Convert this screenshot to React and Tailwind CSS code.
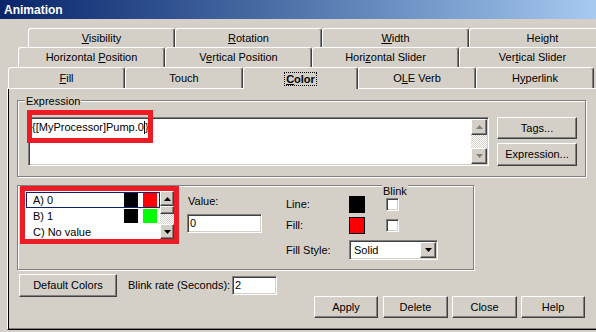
import React from 'react';

const raised =
  'border border-t-white border-l-white border-r-[#404040] border-b-[#404040] shadow-[inset_-1px_-1px_0_#808080] bg-[#d4d0c8]';
const sunken =
  'border border-t-[#808080] border-l-[#808080] border-r-white border-b-white shadow-[inset_1px_1px_0_#404040,inset_-1px_-1px_0_#d4d0c8] p-px';
const etched = 'border border-[#808080] shadow-[inset_1px_1px_0_#ffffff,1px_1px_0_#ffffff]';
const checker =
  'bg-[repeating-conic-gradient(#ffffff_0%_25%,#d4d0c8_0%_50%)] bg-[length:2px_2px]';

function Label({ text }) {
  const i = text.indexOf('&');
  if (i < 0) return <span className="whitespace-pre">{text}</span>;
  return (
    <span className="whitespace-pre">
      {text.slice(0, i)}
      <u>{text[i + 1]}</u>
      {text.slice(i + 2)}
    </span>
  );
}

function Tab({ label, w, active }) {
  return (
    <div
      className={`${w} shrink-0 flex items-center justify-center rounded-t-[3px] border-t border-l border-r border-t-white border-l-white border-r-[#404040] shadow-[inset_-1px_0_0_#808080] ${
        active ? 'h-[22px] relative z-10 bg-[#d4d0c8]' : 'h-full'
      }`}
    >
      {active ? (
        <span className="font-bold border border-dotted border-black px-px leading-[12px]">
          <Label text={label} />
        </span>
      ) : (
        <Label text={label} />
      )}
    </div>
  );
}

function Arrow({ down, gray }) {
  return (
    <svg width="7" height="4" viewBox="0 0 7 4">
      <path d={down ? 'M0 0h7L3.5 4z' : 'M0 4h7L3.5 0z'} fill={gray ? '#808080' : '#000000'} />
    </svg>
  );
}

function Btn({ className, children }) {
  return <div className={`${raised} flex items-center justify-center ${className}`}>{children}</div>;
}

const rows = [
  { label: 'A) 0', a: 'bg-black', b: 'bg-[#ff0000]', sel: true },
  { label: 'B) 1', a: 'bg-black', b: 'bg-[#00ff00]' },
  { label: 'C) No value' },
];

export default function App() {
  return (
    <div className="relative w-[596px] h-[332px] overflow-hidden bg-[#d4d0c8] text-black font-['Liberation_Sans',Arial,sans-serif] text-[11px] leading-[13px]">
      {/* title bar */}
      <div className="h-[19px] flex items-center pt-[2px] pl-[4px] bg-gradient-to-r from-[#0a246a] to-[#a6caf0] text-white font-bold text-[12px]">
        Animation
      </div>

      {/* tab rows */}
      <div className="mt-[9px] ml-[28px] h-[19px] flex">
        <Tab w="w-[147px]" label="&Visibility" />
        <Tab w="w-[147px]" label="&Rotation" />
        <Tab w="w-[147px]" label="&Width" />
        <Tab w="w-[147px]" label="Hei&ght" />
      </div>
      <div className="ml-[18px] h-[20px] flex">
        <Tab w="w-[147px]" label="Horizontal &Position" />
        <Tab w="w-[147px]" label="V&ertical Position" />
        <Tab w="w-[147px]" label="Hori&zontal Slider" />
        <Tab w="w-[147px]" label="Ver&tical Slider" />
      </div>
      <div className="ml-[8px] h-[21px] flex items-start">
        <Tab w="w-[117px]" label="&Fill" />
        <Tab w="w-[118px]" label="Touch" />
        <Tab w="w-[115px]" label="&Color" active />
        <Tab w="w-[118px]" label="O&LE Verb" />
        <Tab w="w-[118px]" label="H&yperlink" />
      </div>

      {/* panel */}
      <div className="ml-[7px] w-[600px] h-[242px] border-t border-l border-b border-t-white border-l-white border-b-black shadow-[inset_1px_0_0_#000000,inset_0_-1px_0_#808080] pt-[11px] pl-[9px]">
        {/* Expression group */}
        <div className={`${etched} relative w-[569px] h-[77px] pl-[10px] pt-[16px] flex`}>
          <span className="absolute -top-[6px] left-[7px] px-px bg-[#d4d0c8]">Expression</span>
          <div className={`${sunken} w-[461px] h-[49px] bg-white flex`}>
            <div className="flex-1 pl-[2px] pt-[2px] flex items-start">
              <span>{'{[MyProcessor]Pump.0'}</span>
              <span className="w-px h-[13px] bg-black" />
              <span>{'}'}</span>
            </div>
            <div className="w-[16px] flex flex-col">
              <Btn className="h-[16px]">
                <Arrow gray />
              </Btn>
              <div className={`flex-1 ${checker}`} />
              <Btn className="h-[16px]">
                <Arrow down gray />
              </Btn>
            </div>
          </div>
          <div className="ml-[8px] w-[80px] flex flex-col gap-[4px]">
            <Btn className="h-[22px]">Tags...</Btn>
            <Btn className="h-[23px]">Expression...</Btn>
          </div>
        </div>

        {/* Color group */}
        <div className={`${etched} relative mt-[8px] w-[457px] h-[85px] pl-[5px] pt-[3px] flex items-start`}>
          <span className="absolute -top-[1px] left-[364px] px-px bg-[#d4d0c8]">Blink</span>
          <div className={`${sunken} w-[153px] h-[52px] bg-white flex`}>
            <div className="flex-1 pt-px">
              {rows.map((r) => (
                <div
                  key={r.label}
                  className={`ml-px h-[16px] flex items-center border ${
                    r.sel ? 'border-[#0a246a]' : 'border-transparent'
                  }`}
                >
                  <span className="flex-1 pl-[6px] whitespace-pre">{r.label}</span>
                  {r.a && (
                    <>
                      <span className={`w-[14px] h-[14px] ${r.a}`} />
                      <span className={`ml-[5px] mr-[2px] w-[14px] h-[14px] ${r.b}`} />
                    </>
                  )}
                </div>
              ))}
            </div>
            <div className="w-[14px] flex flex-col">
              <Btn className="h-[15px]">
                <Arrow />
              </Btn>
              <Btn className="h-[8px]" />
              <div className={`flex-1 ${checker}`} />
              <Btn className="h-[15px]">
                <Arrow down />
              </Btn>
            </div>
          </div>

          <div className="ml-[11px] flex flex-col">
            <span className="ml-px mt-[6px]">Value:</span>
            <div className={`${sunken} mt-[6px] w-[75px] h-[19px] bg-white pl-[2px] flex items-center`}>0</div>
          </div>

          <div className="ml-[24px] mt-[7px] flex flex-col">
            <div className="h-[17px] flex items-center">
              <span className="w-[63px]">Line:</span>
              <span className="w-[16px] h-[17px] bg-black" />
              <span className={`${sunken} ml-[21px] w-[13px] h-[13px] bg-white`} />
            </div>
            <div className="mt-[4px] h-[17px] flex items-center">
              <span className="w-[63px]">Fill:</span>
              <span className="w-[16px] h-[17px] bg-[#ff0000] border border-black" />
              <span className={`${sunken} ml-[21px] w-[13px] h-[13px] bg-white`} />
            </div>
            <div className="mt-[6px] h-[20px] flex items-center">
              <span className="w-[63px]">Fill Style:</span>
              <div className={`${sunken} w-[89px] h-[20px] bg-white flex`}>
                <span className="flex-1 pl-[3px] flex items-center">Solid</span>
                <Btn className="w-[16px]">
                  <Arrow down />
                </Btn>
              </div>
            </div>
          </div>
        </div>

        {/* bottom rows */}
        <div className="mt-[4px] ml-[2px] flex items-center">
          <Btn className="w-[98px] h-[23px]">Default Colors</Btn>
          <span className="ml-[11px] w-[104px]">Blink rate (Seconds):</span>
          <div className={`${sunken} w-[45px] h-[19px] bg-white pl-[2px] flex items-center`}>2</div>
        </div>
        <div className="-mt-px w-[568px] flex justify-end">
          <Btn className="w-[64px] h-[22px]">Apply</Btn>
          <Btn className="ml-[5px] w-[65px] h-[22px]">Delete</Btn>
          <Btn className="ml-[4px] w-[65px] h-[22px]">Close</Btn>
          <Btn className="ml-[4px] w-[64px] h-[22px]">Help</Btn>
        </div>
      </div>

      {/* red annotation boxes */}
      <div className="absolute left-[27px] top-[110px] w-[126px] h-[33px] border-[5px] border-[#ed1c24] pointer-events-none" />
      <div className="absolute left-[20px] top-[186px] w-[159px] h-[58px] border-[5px] border-[#ed1c24] pointer-events-none" />
    </div>
  );
}
